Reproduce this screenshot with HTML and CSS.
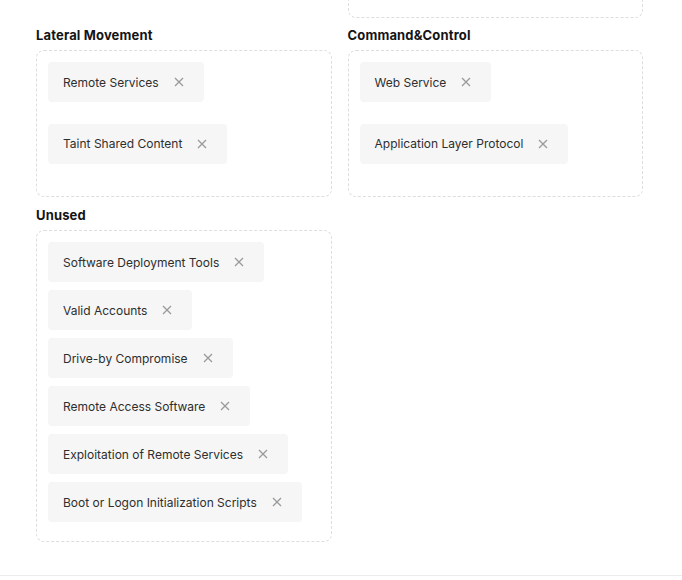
FILE: index.html
```html
<!DOCTYPE html>
<html lang="en">
<head>
<meta charset="utf-8">
<title>Tactics</title>
<link rel="stylesheet" href="styles.css">
</head>
<body>
<div class="page">
  <div class="grid">
    <div class="cell"></div>
    <div class="cell"><div class="box-tail"></div></div>

    <section class="cell">
      <h3 class="title">Lateral Movement</h3>
      <div class="zone">
        <span class="chip">Remote Services<svg class="x" viewBox="0 0 10 10"><path d="M1 1L9 9M9 1L1 9"/></svg></span>
        <span class="chip">Taint Shared Content<svg class="x" viewBox="0 0 10 10"><path d="M1 1L9 9M9 1L1 9"/></svg></span>
      </div>
    </section>
    <section class="cell">
      <h3 class="title">Command&amp;Control</h3>
      <div class="zone">
        <span class="chip">Web Service<svg class="x" viewBox="0 0 10 10"><path d="M1 1L9 9M9 1L1 9"/></svg></span>
        <span class="chip">Application Layer Protocol<svg class="x" viewBox="0 0 10 10"><path d="M1 1L9 9M9 1L1 9"/></svg></span>
      </div>
    </section>

    <section class="cell unused">
      <h3 class="title">Unused</h3>
      <div class="zone">
        <span class="chip">Software Deployment Tools<svg class="x" viewBox="0 0 10 10"><path d="M1 1L9 9M9 1L1 9"/></svg></span>
        <span class="chip">Valid Accounts<svg class="x" viewBox="0 0 10 10"><path d="M1 1L9 9M9 1L1 9"/></svg></span>
        <span class="chip">Drive-by Compromise<svg class="x" viewBox="0 0 10 10"><path d="M1 1L9 9M9 1L1 9"/></svg></span>
        <span class="chip">Remote Access Software<svg class="x" viewBox="0 0 10 10"><path d="M1 1L9 9M9 1L1 9"/></svg></span>
        <span class="chip">Exploitation of Remote Services<svg class="x" viewBox="0 0 10 10"><path d="M1 1L9 9M9 1L1 9"/></svg></span>
        <span class="chip">Boot or Logon Initialization Scripts<svg class="x" viewBox="0 0 10 10"><path d="M1 1L9 9M9 1L1 9"/></svg></span>
      </div>
    </section>
    <div class="cell"></div>
  </div>
  <div class="footer"></div>
</div>
</body>
</html>
```

FILE: styles.css
```css
* { box-sizing: border-box; }
html, body {
  margin: 0;
  padding: 0;
  background: #ffffff;
}
body {
  font-family: Inter, "Noto Sans", "Liberation Sans", sans-serif;
  font-size: 12px;
  color: #333333;
}
.page {
  width: 682px;
  height: 580px;
  overflow: hidden;
}
.grid {
  display: grid;
  grid-template-columns: 1fr 1fr;
  column-gap: 16px;
  row-gap: 7px;
  padding: 0 39px 0 36px;
  align-items: start;
}
.cell { min-width: 0; }
.unused { margin-top: 1px; }
.box-tail {
  height: 18px;
  border: 1px dashed #dddddd;
  border-top: none;
  border-radius: 0 0 8px 8px;
}
.title {
  margin: 0 0 5px;
  font-size: 13px;
  line-height: 20px;
  font-weight: 700;
  letter-spacing: 0.15px;
  color: #141414;
}
.zone {
  display: flex;
  flex-wrap: wrap;
  align-items: flex-start;
  min-height: 147px;
  padding: 11px;
  border: 1px dashed #dddddd;
  border-radius: 8px;
}
.chip {
  display: inline-flex;
  align-items: center;
  gap: 15px;
  height: 40px;
  padding: 0 20px 0 15px;
  margin-bottom: 8px;
  margin-right: 100%;
  background: #f6f6f6;
  border-radius: 4px;
  white-space: nowrap;
  color: #2e2e2e;
}
.x {
  width: 10px;
  height: 10px;
  flex: none;
  fill: none;
  stroke: #9a9a9a;
  stroke-width: 1.3;
}
.footer {
  margin-top: 33px;
  border-top: 1px solid #ececec;
}
```
